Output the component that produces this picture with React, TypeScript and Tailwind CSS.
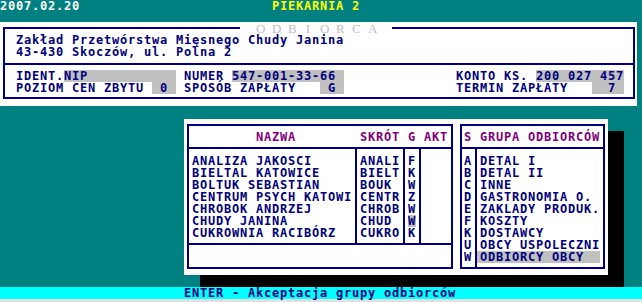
const firms: [string, string, string][] = [
  ['ANALIZA JAKOSCI', 'ANALI', 'F'],
  ['BIELTAL KATOWICE', 'BIELT', 'K'],
  ['BOLTUK SEBASTIAN', 'BOUK', 'W'],
  ['CENTRUM PSYCH KATOWI', 'CENTR', 'Z'],
  ['CHROBOK ANDRZEJ', 'CHROB', 'W'],
  ['CHUDY JANINA', 'CHUD', 'W'],
  ['CUKROWNIA RACIBÓRZ', 'CUKRO', 'K'],
];

const groups: [string, string][] = [
  ['A', 'DETAL I'],
  ['B', 'DETAL II'],
  ['C', 'INNE'],
  ['D', 'GASTRONOMIA O.'],
  ['E', 'ZAKLADY PRODUK.'],
  ['F', 'KOSZTY'],
  ['K', 'DOSTAWCY'],
  ['U', 'OBCY USPOLECZNI'],
  ['W', 'ODBIORCY OBCY'],
];

export default function App() {
  return (
    <div className="h-[302px] w-full overflow-hidden whitespace-pre bg-[#008080] font-['DejaVu_Sans_Mono',monospace] text-[12px] font-bold leading-[13px] tracking-[0.776px] text-[#000080]">
      {/* title bar */}
      <div className="flex h-[12px]">
        <span className="text-white">2007.02.20</span>
        <span className="ml-[192px] text-[#ffff00]">PIEKARNIA 2</span>
      </div>

      {/* customer panel */}
      <div className="mt-[10px] h-[84px] w-[637px] bg-white pl-[3px] pt-[5px]">
        <div className="relative h-[72px] w-[632px] border-2 border-[#000080] pl-[11px] pt-[5px]">
          <div className="absolute left-[235px] top-[-7px] flex h-[12px] gap-[8px] bg-white px-[16px] font-['Liberation_Serif',serif] text-[13px] font-normal leading-[13px] tracking-normal text-[#c0c0c0]">
            {'ODBIORCA'.split('').map((c, i) => (
              <span key={i} className="w-[8px] text-center">
                {c}
              </span>
            ))}
          </div>
          <div className="h-[12px]">Zakład Przetwórstwa Mięsnego Chudy Janina</div>
          <div className="h-[12px]">43-430 Skoczów, ul. Polna 2</div>
          <div className="-ml-[11px] mt-[5px] h-[2px] bg-[#000080]" />
          <div className="mt-[5px] flex h-[12px]">
            <span>IDENT.</span>
            <span className="bg-[#c0c0c0]">{'NIP           '}</span>
            <span>{' NUMER '}</span>
            <span className="bg-[#c0c0c0]">{'547-001-33-66 '}</span>
            <span>{'              KONTO KS. '}</span>
            <span className="bg-[#c0c0c0]">200 027 457</span>
          </div>
          <div className="flex h-[12px]">
            <span>{'POZIOM CEN ZBYTU '}</span>
            <span className="bg-[#c0c0c0]">{' 0 '}</span>
            <span>{' SPOSÓB ZAPŁATY   '}</span>
            <span className="bg-[#c0c0c0]">{' G '}</span>
            <span>{'              TERMIN ZAPŁATY   '}</span>
            <span className="bg-[#c0c0c0]">{'  7 '}</span>
          </div>
        </div>
      </div>

      {/* group selection dialog */}
      <div className="ml-[184px] mt-[13px] flex h-[156px] w-[424px] gap-[7px] bg-white pl-[3px] pt-[5px] shadow-[16px_12px_0_0_#000]">
        <div className="flex h-[145px] w-[266px] flex-col border-2 border-[#000080]">
          <div className="ml-[3px] mt-[5px] h-[12px] text-[#800080]">{'        NAZWA        SKRÓT G AKT'}</div>
          <div className="mt-[4px] h-[2px] bg-[#000080]" />
          <div className="flex h-[94px]">
            <div className="w-[166px] pl-[3px] pt-[6px]">
              {firms.map(([name]) => (
                <div key={name} className="h-[12px]">
                  {name}
                </div>
              ))}
            </div>
            <div className="w-[2px] bg-[#000080]" />
            <div className="w-[46px] pl-[3px] pt-[6px]">
              {firms.map(([name, short]) => (
                <div key={name} className="h-[12px]">
                  {short}
                </div>
              ))}
            </div>
            <div className="w-[2px] bg-[#000080]" />
            <div className="w-[14px] pl-[3px] pt-[6px]">
              {firms.map(([name, , g]) => (
                <div key={name} className="flex h-[12px]">
                  <span className={name === 'CHUDY JANINA' ? 'w-[8px] bg-[#c0c0c0]' : 'w-[8px]'}>{g}</span>
                </div>
              ))}
            </div>
            <div className="w-[2px] bg-[#000080]" />
            <div className="flex-1" />
          </div>
          <div className="h-[2px] bg-[#000080]" />
        </div>

        <div className="flex h-[145px] w-[145px] flex-col border-2 border-[#000080]">
          <div className="ml-[2px] mt-[5px] h-[12px] text-[#800080]">S GRUPA ODBIORCÓW</div>
          <div className="mt-[4px] h-[2px] bg-[#000080]" />
          <div className="flex flex-1">
            <div className="w-[13px] pl-[2px] pt-[6px]">
              {groups.map(([code]) => (
                <div key={code} className="h-[12px]">
                  {code}
                </div>
              ))}
            </div>
            <div className="w-[2px] bg-[#000080]" />
            <div className="flex-1 pt-[6px]">
              {groups.map(([code, label]) => (
                <div
                  key={code}
                  className={code === 'W' ? 'h-[12px] w-[123px] bg-[#c0c0c0] pl-[3px]' : 'h-[12px] pl-[3px]'}
                >
                  {label}
                </div>
              ))}
            </div>
          </div>
        </div>
      </div>

      {/* status line */}
      <div className="mt-[12px] h-[12px] bg-[#00ffff] pl-[184px]">ENTER - Akceptacja grupy odbiorców</div>
      <div className="h-[3px] bg-[#e0e0e0]" />
    </div>
  );
}
